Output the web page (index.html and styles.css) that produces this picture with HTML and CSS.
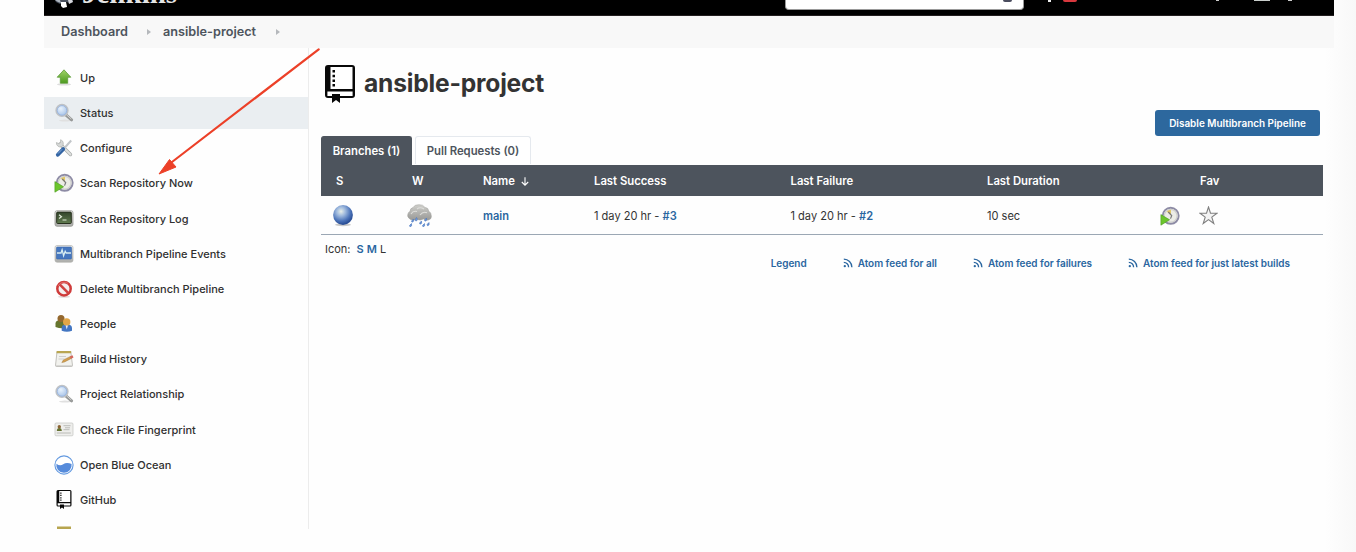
FILE: index.html
```html
<!DOCTYPE html>
<html lang="en">
<head>
<meta charset="utf-8">
<title>ansible-project [Jenkins]</title>
<link rel="stylesheet" href="styles.css">
</head>
<body>
<svg class="defs" width="0" height="0" aria-hidden="true">
  <defs>
    <linearGradient id="green" x2="0" y2="1"><stop stop-color="#a0d468"/><stop offset="1" stop-color="#4c9a1e"/></linearGradient>
    <linearGradient id="metal" x2="0" y2="1"><stop stop-color="#f0f0ee"/><stop offset="1" stop-color="#aaaba8"/></linearGradient>
    <linearGradient id="screen" x2="0" y2="1"><stop stop-color="#32442b"/><stop offset="1" stop-color="#617c50"/></linearGradient>
    <linearGradient id="cloud" x2="0" y2="1"><stop stop-color="#cfcfcb"/><stop offset="1" stop-color="#999996"/></linearGradient>
    <radialGradient id="glass" cx=".4" cy=".35"><stop stop-color="#e9f3fd"/><stop offset="1" stop-color="#b5cdec"/></radialGradient>
    <radialGradient id="ball" cx=".4" cy=".32" r=".65"><stop stop-color="#e9efe8"/><stop offset=".35" stop-color="#9db8dd"/><stop offset=".75" stop-color="#4a72b8"/><stop offset="1" stop-color="#2b4f96"/></radialGradient>
    <symbol id="i-search" viewBox="0 0 20 20">
      <ellipse cx="11" cy="17.6" rx="6" ry="1" fill="#e0e0e0"/>
      <path d="M12 12l5.6 4.8" stroke="#969897" stroke-width="3" stroke-linecap="round"/>
      <path d="M12.500 11.800l4.800 4.200" stroke="#d0d0d0" stroke-width="1"/>
      <circle cx="8" cy="7.4" r="5.8" fill="url(#glass)" stroke="#bfc2c5" stroke-width="1.7"/>
      <circle cx="8" cy="7.4" r="4.8" fill="none" stroke="#8dade0" stroke-width=".7"/>
    </symbol>
    <symbol id="i-clock" viewBox="0 0 20 20">
      <circle cx="10.700" cy="9.800" r="8" fill="#ecece6" stroke="#8d8ba5" stroke-width="1.900"/>
      <circle cx="10.700" cy="9.800" r="6.400" fill="none" stroke="#cfcfce" stroke-width="1.200"/>
      <path d="M11 9.600L6.800 5.600A6 6 0 0 1 11 3.800z" fill="#e2c968"/>
      <path d="M8.300 6l3.400 3.600-1.200 3" fill="none" stroke="#777879" stroke-width="1.200"/>
      <path d="M.9 8.600l8.700 5.200-8.700 5.400z" fill="#6cc52d" stroke="#4d9c22" stroke-width=".6"/>
    </symbol>
    <symbol id="i-book" viewBox="0 0 30 38">
      <path d="M3 0h24a3 3 0 0 1 3 3v27a3 3 0 0 1-3 3H15v5l-4-3-4 3v-5H3a3 3 0 0 1-3-3V3a3 3 0 0 1 3-3z" fill="#080808"/>
      <path d="M5.500 2h22v22h-22zM2.400 26.500h25.200V31H15v-2H7v2H2.400z" fill="#fff"/>
      <path d="M7.500 5h2.500v2.500h-2.500zM7.500 9.700h2.500v2.500h-2.500zM7.500 14.400h2.500v2.500h-2.500zM7.500 19.100h2.500v2.500h-2.500z" fill="#080808"/>
    </symbol>
    <symbol id="i-rss" viewBox="0 0 10 10">
      <circle cx="1.8" cy="8.2" r="1.15" fill="#2a66a0"/>
      <path d="M.8 4.4a4.8 4.8 0 0 1 4.8 4.8M.8 1.1a8.1 8.1 0 0 1 8.1 8.1" fill="none" stroke="#2a66a0" stroke-width="1.3"/>
    </symbol>
  </defs>
</svg>

<div class="page">
  <header class="topbar">
    <svg class="butler" width="18" height="9" viewBox="0 0 18 9"><path d="M0 0h18v2l-3 1-4-1-6 2-4-2z" fill="#49505d"/><path d="M0 0h5l1 3-3-1z" fill="#aeb5bf"/><path d="M6 2l5 0 1 5-4 1-2-2z" fill="#fff"/><path d="M13 0h4l1 2-4 2z" fill="#d6d7dc"/></svg>
    <span class="brand">Jenkins</span>
    <div class="search"><i class="help"></i></div>
    <i class="bell"></i><i class="alert"></i><i class="shield"></i><i class="user"></i><i class="exit"></i>
  </header>

  <nav class="crumbs">
    <a>Dashboard</a>
    <svg width="4" height="6" viewBox="0 0 4 6"><path d="M0 0l4 3-4 3z" fill="#b5b8bc"/></svg>
    <a>ansible-project</a>
    <svg width="4" height="6" viewBox="0 0 4 6"><path d="M0 0l4 3-4 3z" fill="#b5b8bc"/></svg>
  </nav>

  <div class="body">
    <aside class="side">
      <a class="task"><svg viewBox="0 0 20 20"><ellipse cx="10" cy="16.4" rx="7" ry="1.2" fill="#ddd"/><path d="M10 1.8l6.8 7.4h-3.1v6H6.3v-6H3.2z" fill="url(#green)" stroke="#5d9c38" stroke-width=".8"/></svg>Up</a>
      <a class="task current"><svg><use href="#i-search"/></svg>Status</a>
      <a class="task"><svg viewBox="0 0 20 20"><path d="M6 6l10.5 10.5" stroke="#a7aaa9" stroke-width="3.3" stroke-linecap="round"/><path d="M6 6l10.5 10.5" stroke="#e0e2e0" stroke-width="1.8" stroke-linecap="round"/><path d="M2.4 4.5a4 4 0 0 0 5.2 4.3A4 4 0 0 0 6.6 1.7L6.5 4.6 4.8 5.6z" fill="#d5d7d6" stroke="#a4a7a5" stroke-width=".6"/><path d="M10 10.5l7.2-8" stroke="#c1c5c8" stroke-width="2"/><path d="M3.8 16.8l5.4-5.7" stroke="#3465a4" stroke-width="3.8" stroke-linecap="round"/><path d="M4 15.6l4-4.2" stroke="#82a8d8" stroke-width="1"/></svg>Configure</a>
      <a class="task"><svg><use href="#i-clock"/></svg>Scan Repository Now</a>
      <a class="task"><svg viewBox="0 0 20 20"><rect x="1" y="1.7" width="18" height="15.6" rx="2" fill="url(#metal)" stroke="#8c8e88" stroke-width=".7"/><rect x="2.7" y="3.1" width="14.6" height="11.4" rx=".8" fill="url(#screen)" stroke="#28311f"/><path d="M5 5.8l2.5 1.9L5 9.6M8.5 11h4" fill="none" stroke="#e2ebdc" stroke-width="1.2"/></svg>Scan Repository Log</a>
      <a class="task"><svg viewBox="0 0 20 20"><rect x="1" y="1.5" width="18" height="16.7" rx="2" fill="url(#metal)" stroke="#b4b5b2" stroke-width=".7"/><rect x="2.5" y="3" width="15" height="12" rx=".8" fill="#4677bf" stroke="#3767ab" stroke-width=".6"/><path d="M3 9h4l1.1-3.3 1.5 6 1.6-4.5 1 1.8H17" fill="none" stroke="#d8edf2" stroke-width="1.3"/></svg>Multibranch Pipeline Events</a>
      <a class="task"><svg viewBox="0 0 20 20"><ellipse cx="10" cy="17.8" rx="6" ry="1" fill="#e2d9d9"/><circle cx="10" cy="9.7" r="6.7" fill="#f4eeee" stroke="#cf3b3a" stroke-width="2.5"/><path d="M5.4 5.2l9.2 9.1" stroke="#d04241" stroke-width="2.6"/><path d="M4.1 7a6.8 6.8 0 0 1 10-2.6" fill="none" stroke="#e88482" stroke-width=".7"/></svg>Delete Multibranch Pipeline</a>
      <a class="task"><svg viewBox="0 0 20 20"><path d="M1.500 13V9.500q0-3.500 5-3.500t5 3v5q-5 1-10-1z" fill="#66752e"/><circle cx="7" cy="4.500" r="3.500" fill="#94682e"/><path d="M7.700 16.700v-3q0-3.500 5-3.500t5.300 3.500v3q-5 2-10.300 0z" fill="#4376c2"/><circle cx="12.700" cy="8" r="3.700" fill="#e1a546"/><path d="M11.600 11.500h2.300l-1.100 4z" fill="#e7edf5"/></svg>People</a>
      <a class="task"><svg viewBox="0 0 20 20"><path d="M3 2.5h13.8l1.7 14q0 1-1 1h-15q-1 0-1-1z" fill="#f2f2ee" stroke="#aaa9a4" stroke-width=".7"/><path d="M2.7 2h14.4v2.3H2.5z" fill="#b9a651"/><path d="M5 7.5h7M4.5 10h6M2 16.8h16" stroke="#c9cac6" stroke-width=".9"/><path d="M7.8 13.6l1.6-2.7 7-3.5 1 2-6.9 3.6z" fill="#d39d4e" stroke="#94702e" stroke-width=".4"/><path d="M15.8 7.5l2.7-1.2 1 2.2-2.5 1.2z" fill="#d5655c"/></svg>Build History</a>
      <a class="task"><svg><use href="#i-search"/></svg>Project Relationship</a>
      <a class="task"><svg viewBox="0 0 20 20"><rect x="1" y="3" width="18" height="12.800" rx="1" fill="#eeeeec" stroke="#c3c4c1" stroke-width=".7"/><path d="M2.800 11.100q0-3 2.500-3t2.500 3z" fill="#657333"/><circle cx="5.300" cy="6.800" r="1.700" fill="#8b6434"/><path d="M9.500 5.700h7M11 7.800h5M9.500 9.700h6M2.800 13h14" stroke="#b3b4b1" stroke-width=".9"/></svg>Check File Fingerprint</a>
      <a class="task"><svg viewBox="0 0 20 20"><circle cx="10" cy="10" r="9.1" fill="#fff" stroke="#649ae0" stroke-width="1.1"/><path d="M2.400 8.700q3.600 2.800 6.800.6t8.400-.3A7.700 7.700 0 1 1 2.400 8.700z" fill="#568bdb"/></svg>Open Blue Ocean</a>
      <a class="task"><svg class="small-book"><use href="#i-book"/></svg>GitHub</a>
      <a class="task"><svg viewBox="0 0 20 20"><path d="M3 1.500h14v3H3z" fill="#b7a54f"/></svg></a>
    </aside>

    <main class="main">
      <h1><svg width="30" height="38"><use href="#i-book"/></svg>ansible-project</h1>
      <button class="disable">Disable Multibranch Pipeline</button>
      <div class="tabs"><a class="tab active">Branches (1)</a><a class="tab">Pull Requests (0)</a></div>
      <table>
        <colgroup><col class="c-s"><col class="c-w"><col class="c-name"><col class="c-last"><col class="c-last"><col class="c-dur"><col class="c-run"><col></colgroup>
        <thead><tr><th>S</th><th>W</th><th>Name <svg width="8" height="9" viewBox="0 0 8 9"><path d="M4 .3v7.8M.8 5L4 8.2 7.2 5" fill="none" stroke="#fff" stroke-width="1.1"/></svg></th><th>Last Success</th><th>Last Failure</th><th>Last Duration</th><th></th><th>Fav</th></tr></thead>
        <tbody><tr>
          <td class="ball"><svg width="22" height="23" viewBox="0 0 22 23"><ellipse cx="11" cy="20.8" rx="8" ry="1.4" fill="#c9c9c9"/><circle cx="11" cy="11" r="9.9" fill="url(#ball)"/></svg></td>
          <td class="weather"><svg width="25" height="24" viewBox="0 0 25 24"><path d="M3 15.2Q-.5 13 1 9.7q.6-2 2-2.3 0-3 3-3.8Q7.500.4 12 .7q4-.3 6 2.700 3.500 .3 3.700 3.700 2.700 1.500 2.700 5.100.2 3-3 3.800-3 .5-5-1-3 2-6 .4-4 1.500-7.400-.2z" fill="url(#cloud)" stroke="#a0a09d" stroke-width=".5"/><path d="M4 10q2-3.500 6-2.500M10 5q3-2.500 7 0M13 11q3-4 7-2.200" fill="none" stroke="#dededb" stroke-width="1.1"/><g fill="#719bdc" stroke="#4571b7" stroke-width=".5"><path d="M9.500 13.500q2 3-.5 3.500-2-.5.500-3.500zM6.500 15q.9 3-1.500 3.200-1.700-.8 1.500-3.200zM14.500 17q1 3-1.500 3.200-1.700-.8 1.500-3.200zM19.500 14q1 3-1.500 3.200-1.700-.8 1.500-3.200zM4.500 19.500q1 3-1.500 3.200-1.700-.8 1.500-3.200zM17.500 19.500q1 3-1.500 3.200-1.700-.8 1.500-3.200zM22 18.500q1 3-1.500 3.200-1.700-.8 1.500-3.200z"/></g></svg></td>
          <td><a class="name">main</a></td>
          <td>1 day 20 hr - <a>#3</a></td>
          <td>1 day 20 hr - <a>#2</a></td>
          <td>10 sec</td>
          <td class="run"><svg width="20" height="20"><use href="#i-clock"/></svg></td>
          <td class="fav"><svg width="19" height="19" viewBox="0 0 19 19"><path d="M9.500 1l2 6.200h6.500l-5.200 3.900 2 6.400-5.300-3.900-5.300 3.900 2-6.400L1 7.200h6.500z" fill="#f3f3f3" stroke="#808080" stroke-width="1.100"/></svg></td>
        </tr></tbody>
      </table>
      <div class="sizes">Icon: <span><a>S</a> <a>M</a> L</span></div>
      <div class="feeds">
        <a>Legend</a>
        <a><svg width="10" height="10"><use href="#i-rss"/></svg>Atom feed for all</a>
        <a><svg width="10" height="10"><use href="#i-rss"/></svg>Atom feed for failures</a>
        <a><svg width="10" height="10"><use href="#i-rss"/></svg>Atom feed for just latest builds</a>
      </div>
    </main>
  </div>
</div>
<svg class="pointer" width="164" height="130" viewBox="0 0 164 130"><path d="M161.700 2.300L15 115" stroke="#ec4028" stroke-width="2.200" stroke-linecap="round"/><path d="M2 127L12.500 112.500 19 120z" fill="#ec4028" stroke="#ec4028"/></svg>
</body>
</html>
```
FILE: styles.css
```css
* { box-sizing: border-box; }
body {
  margin: 0;
  height: 552px;
  overflow: hidden;
  font-family: Inter, "Liberation Sans", sans-serif;
  color: #333;
  background: linear-gradient(90deg, #fefefe 1325px, #f8f8f8 1356px);
}
.defs { position: absolute; }
svg { display: block; flex: none; }
.page { width: 1290px; height: 529px; margin-left: 44px; overflow: hidden; }

.topbar { display: flex; align-items: flex-start; height: 16px; background: #000; overflow: hidden; border-bottom: 1px solid #231f20; }
.butler { margin-left: 11px; }
.brand { width: 97px; margin-left: 9px; margin-top: -23px; font: bold 29px/32px "Liberation Serif", serif; color: #e5e5e5; }
.search { display: flex; justify-content: flex-end; width: 239px; height: 10px; margin-left: 606px; padding-right: 11px; background: #fff; border: 1px solid #999; border-top: 0; border-radius: 0 0 4px 4px; }
.help { width: 9px; height: 2px; background: #4a4c5e; border-radius: 0 0 6px 6px; }
.bell { width: 3px; height: 2px; margin-left: 24px; background: #eee; }
.alert { width: 14px; height: 2px; margin-left: 12px; background: #d9383e; border-radius: 0 0 4px 4px; }
.shield { width: 3px; height: 1px; margin-left: 139px; background: #ccc; }
.user { width: 16px; height: 1px; margin-left: 35px; background: #c9cecb; }
.exit { width: 4px; height: 1px; margin-left: 18px; background: #ccc; }

.crumbs { display: flex; align-items: center; height: 32px; padding: 0 0 1px 17px; font-size: 12.700px; font-weight: 600; color: #4d545d; background: #f8f8f8; }
.crumbs a:first-child { width: 86px; }
.crumbs svg + a { width: 113px; margin-left: 12px; }

.body { display: flex; height: 481px; }
.side { width: 265px; padding-top: 14px; border-right: 1px solid #ececec; }
.task { display: flex; align-items: center; gap: 6px; height: 32px; margin-bottom: 3.170px; padding-left: 10px; font-size: 11px; line-height: 14px; font-weight: 500; color: #303030; white-space: nowrap; }
.task svg { width: 20px; height: 20px; }
.task .small-book { height: 19px; }
.current { background: #eaeef1; }

.main { display: flex; flex-direction: column; width: 1014px; padding: 17px 0 0 12px; }
h1 { display: flex; align-items: center; gap: 9px; height: 38px; margin: -1px 0 1px 4px; font-size: 24.600px; font-weight: 700; line-height: 34px; letter-spacing: -.2px; }
h1 svg { margin-top: 1px; }
.disable { align-self: flex-end; width: 165px; height: 26px; margin: 7px 3px 0 0; padding: 0; border: 0; border-radius: 3px; color: #fff; background: #2d689e; font: 600 9.950px/26px Inter, sans-serif; white-space: nowrap; }
.tabs { display: flex; gap: 3px; height: 29px; }
.tab { width: 116px; height: 28px; padding: 0; border: 1px solid #e5e9ee; border-bottom: 0; border-radius: 3px 3px 0 0; font-size: 11.300px; font-weight: 600; line-height: 29px; text-align: center; color: #4d545d; background: #fff; white-space: nowrap; }
.tab.active { width: 91px; height: 29px; color: #fff; background: #4d545d; border-color: #4d545d; }

table { width: 1002px; table-layout: fixed; border-collapse: separate; border-spacing: 0; }
.c-s { width: 76px; }
.c-w { width: 71px; }
.c-name { width: 111px; }
.c-last { width: 196.500px; }
.c-dur { width: 174px; }
.c-run { width: 39px; }
th { height: 31px; padding: 1px 0 0 15px; background: #4d545d; color: #fff; font-size: 11.300px; font-weight: 600; text-align: left; white-space: nowrap; }
th svg { display: inline-block; vertical-align: -1px; margin-left: 3px; }
td { height: 39px; padding: 1px 0 0 15px; border-bottom: 1px solid #9ba7b4; font-size: 11.050px; color: #333; white-space: nowrap; }
td.ball { padding-left: 11px; }
td.weather { padding-left: 10px; }
td.run, td.fav { padding-left: 14px; }
td a, .sizes a { color: #2a66a0; font-weight: 600; }
.sizes { display: flex; gap: 6px; height: 14px; margin: 7px 0 0 4px; font-size: 11px; line-height: 14px; }
.feeds { display: flex; align-items: center; justify-content: flex-end; gap: 36px; height: 14px; padding-right: 33px; font-size: 9.970px; font-weight: 600; color: #2a66a0; white-space: nowrap; }
.feeds a { display: flex; align-items: center; gap: 5px; }

.pointer { position: absolute; left: 157px; top: 47px; }
```
